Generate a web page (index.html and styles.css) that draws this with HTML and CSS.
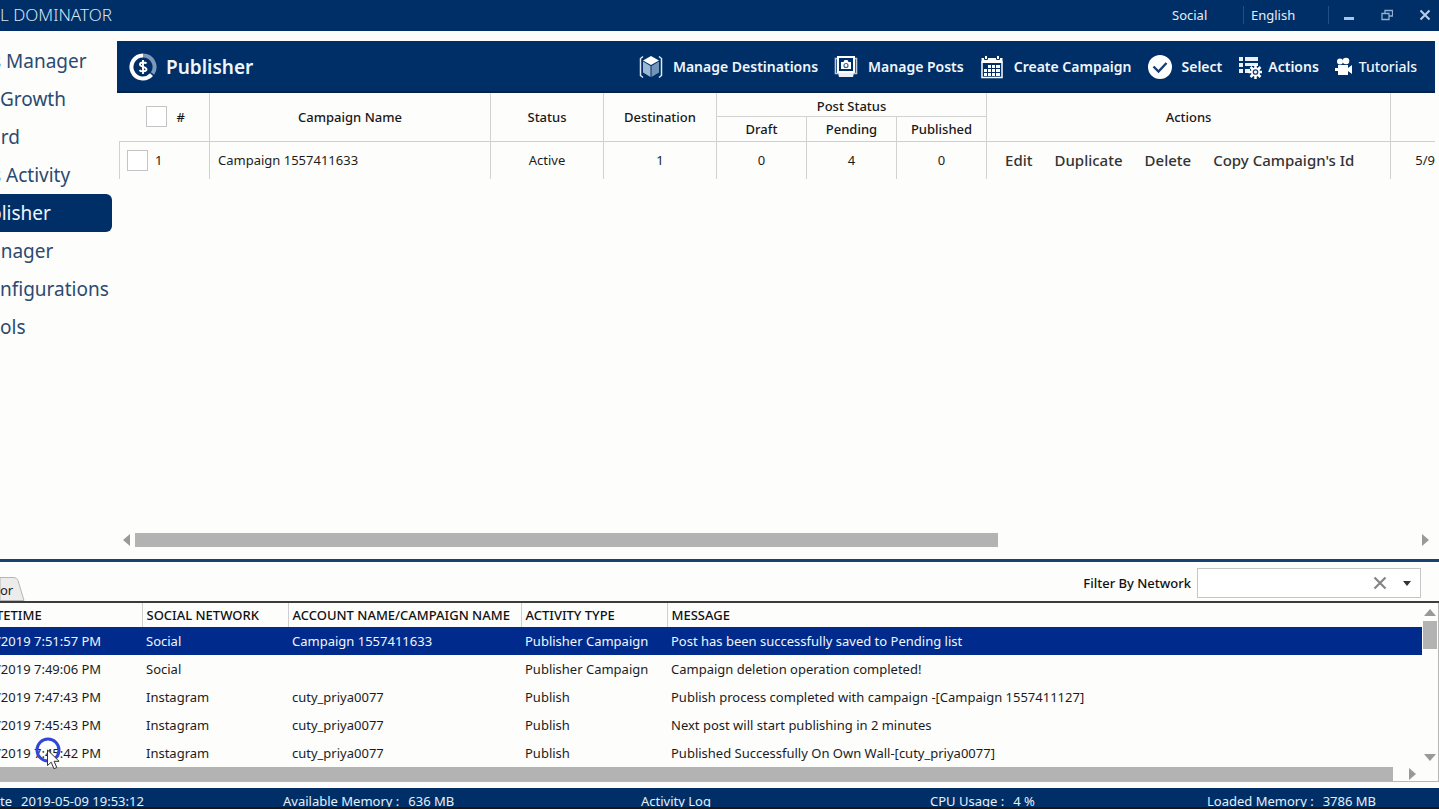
FILE: index.html
```html
<!DOCTYPE html>
<html lang="en">
<head>
<meta charset="utf-8">
<title>Social Dominator</title>
<link rel="stylesheet" href="styles.css">
</head>
<body>
<header class="titlebar">
  <span class="brand">L DOMINATOR</span>
  <button class="title-select network">Social</button>
  <button class="title-select language">English</button>
  <div class="window-buttons">
    <button aria-label="Minimize"><svg width="12" height="14" viewBox="0 0 12 14"><path d="M1 10.500h10" stroke="#a9c6e4" stroke-width="3"/></svg></button>
    <button aria-label="Restore"><svg width="12" height="14" viewBox="0 0 12 14" fill="none" stroke="#8fb0d2"><path d="M4 5V2.500h7.500v5.500H8M1 5.500h7v6H1z" stroke-width="1.300"/></svg></button>
    <button aria-label="Close"><svg width="12" height="14" viewBox="0 0 12 14"><path d="M1.500 2.500l9 9M10.500 2.500l-9 9" stroke="#b7d0e8" stroke-width="2"/></svg></button>
  </div>
</header>

<div class="workspace">
  <nav class="sidebar">
    <a href="#" class="nav-item cut">s Manager</a>
    <a href="#" class="nav-item">Growth</a>
    <a href="#" class="nav-item cut-wide">ard</a>
    <a href="#" class="nav-item cut">s Activity</a>
    <a href="#" class="nav-item active cut-wide">blisher</a>
    <a href="#" class="nav-item cut-wide">anager</a>
    <a href="#" class="nav-item">nfigurations</a>
    <a href="#" class="nav-item">ols</a>
  </nav>

  <main class="publisher">
    <div class="toolbar">
      <svg class="logo" width="28" height="28" viewBox="0 0 28 28" fill="none">
        <path d="M14 2.500a11.500 11.500 0 0 1 9.500 18" stroke="#7d98bb" stroke-width="4"/>
        <path d="M14 2.500a11.500 11.500 0 1 0 8.500 19.200" stroke="#fff" stroke-width="4"/>
        <path d="M17.500 10.500c-1-1.300-6.500-1.600-6.500 1 0 2.700 6.500 1.900 6.500 4.800 0 2.600-5.700 2.500-7 .8M14 7v14" stroke="#fff" stroke-width="1.900"/>
      </svg>
      <h1>Publisher</h1>
      <div class="tools">
        <button class="tool wide">
          <svg width="24" height="24" viewBox="0 0 24 24"><path d="M12 1l8 4.500-8 4.500-8-4.500z" fill="#fff"/><path d="M4 6.500l7.500 4.500v11L4 17.500z" fill="#9db8d2"/><path d="M20 6.500L12.500 11v11l7.500-4.500z" fill="#7294b8"/><path d="M4 1.500L1.500 3.500v17L4 22.500M20 1.500l2.500 2v17l-2.500 2" fill="none" stroke="#dbe8f3" stroke-width="1.500"/></svg>
          Manage Destinations</button>
        <button class="tool wide">
          <svg width="24" height="24" viewBox="0 0 24 24"><path d="M4 2h16v15H4z" fill="none" stroke="#fff" stroke-width="2"/><path d="M3 3.500H1.500v15H4M21 3.500h1.500v15H20" fill="none" stroke="#b8cce0" stroke-width="1.600"/><path d="M4 18h16l-1 4H5z" fill="#e8f1f8"/><path d="M7 7h2.500l1-2h3l1 2H17v7H7z" fill="#fff"/><circle cx="12" cy="10.500" r="2" fill="none" stroke="#3d6390" stroke-width="1.200"/></svg>
          Manage Posts</button>
        <button class="tool wide">
          <svg width="24" height="24" viewBox="0 0 24 24"><path d="M1.500 3h21v5h-21z" fill="#fff"/><path d="M2 7h20v15.500H2z" fill="none" stroke="#fff" stroke-width="1.500"/><path d="M4.500.5h3v4h-3zM16.500.5h3v4h-3z" fill="#fff" stroke="#002f67"/><path d="M8 10h3v3H8zM12 10h3v3h-3zM16 10h4v3h-4zM4 14h3v3H4zM8 14h3v3H8zM12 14h3v3h-3zM16 14h4v3h-4zM4 18h3v3H4zM8 18h3v3H8zM12 18h3v3h-3zM16 18h4v3h-4z" fill="#fff"/></svg>
          Create Campaign</button>
        <button class="tool wide">
          <svg width="24" height="24" viewBox="0 0 24 24"><circle cx="12" cy="12" r="12" fill="#fff"/><path d="M5.500 11.500l5 5L18.500 8" fill="none" stroke="#173e72" stroke-width="2.400"/></svg>
          Select</button>
        <button class="tool">
          <svg width="24" height="24" viewBox="0 0 24 24"><path d="M1 2h4v4H1zM7 2h13v4H7zM1 8h4v4H1zM7 8h13v3H7zM1 14h4v4H1zM7 14h5v4H7z" fill="#e8f1f8"/><path d="M17.500 10v14M10.500 17h14M12.500 12l10 10M22.500 12l-10 10" stroke="#fff" stroke-width="2.500"/><circle cx="17.500" cy="17" r="4.500" fill="#fff"/><circle cx="17.500" cy="17" r="2.200" fill="#fff" stroke="#173e72" stroke-width="1.300"/></svg>
          Actions</button>
        <button class="tool light">
          <svg width="18" height="20" viewBox="0 0 18 20" fill="#fff"><circle cx="5" cy="4.500" r="3"/><circle cx="11" cy="4" r="3.300"/><path d="M3 8h10v3l4-3v9l-4-3v4H3v-4H0v-3h3z"/></svg>
          Tutorials</button>
      </div>
    </div>

    <div class="grid-area">
      <table class="campaigns">
        <colgroup><col class="c-num"><col class="c-name"><col class="c-mid"><col class="c-mid"><col class="c-post"><col class="c-post"><col class="c-post"><col class="c-act"><col></colgroup>
        <thead>
          <tr class="group-row">
            <th rowspan="2" class="pick-all"><label><input type="checkbox"> #</label></th>
            <th rowspan="2">Campaign Name</th>
            <th rowspan="2">Status</th>
            <th rowspan="2">Destination</th>
            <th colspan="3" class="group">Post Status</th>
            <th rowspan="2">Actions</th>
            <th rowspan="2"></th>
          </tr>
          <tr class="sub-row"><th>Draft</th><th>Pending</th><th>Published</th></tr>
        </thead>
        <tbody>
          <tr>
            <td class="pick"><label><input type="checkbox"> 1</label></td>
            <td class="name">Campaign 1557411633</td>
            <td>Active</td><td>1</td><td>0</td><td>4</td><td>0</td>
            <td class="row-actions"><div><button>Edit</button><button>Duplicate</button><button>Delete</button><button>Copy Campaign's Id</button></div></td>
            <td class="date">5/9</td>
          </tr>
        </tbody>
      </table>
    </div>

    <div class="hscroll">
      <svg width="7" height="12" viewBox="0 0 7 12"><path d="M7 0v12L0 6z" fill="#999"/></svg>
      <div class="track"><div class="thumb"></div></div>
      <svg width="7" height="12" viewBox="0 0 7 12"><path d="M0 0v12l7-6z" fill="#999"/></svg>
    </div>
  </main>
</div>

<section class="log">
  <div class="log-head">
    <div class="tab">
      <svg width="26" height="24" viewBox="0 0 26 24"><path d="M0 .5h13c3 0 4 1 5 3l6 20H0z" fill="#ececec" stroke="#b5b5b5"/></svg>
      <span>or</span>
    </div>
    <label class="filter-label" for="network">Filter By Network</label>
    <div class="combo">
      <input id="network" type="text">
      <button aria-label="Clear"><svg width="14" height="14" viewBox="0 0 14 14"><path d="M1.500 1.500l11 11M12.500 1.500l-11 11" stroke="#858585" stroke-width="2.200"/></svg></button>
      <button aria-label="Open list"><svg width="8" height="5" viewBox="0 0 8 5"><path d="M0 0h8L4 5z" fill="#333"/></svg></button>
    </div>
  </div>
  <div class="log-body">
    <div class="log-main">
      <table class="events">
        <colgroup><col class="e-time"><col class="e-net"><col class="e-acc"><col class="e-type"><col></colgroup>
        <thead><tr><th>TETIME</th><th>SOCIAL NETWORK</th><th>ACCOUNT NAME/CAMPAIGN NAME</th><th>ACTIVITY TYPE</th><th>MESSAGE</th></tr></thead>
        <tbody>
          <tr class="selected"><td>/2019 7:51:57 PM</td><td>Social</td><td>Campaign 1557411633</td><td>Publisher Campaign</td><td>Post has been successfully saved to Pending list</td></tr>
          <tr><td>/2019 7:49:06 PM</td><td>Social</td><td></td><td>Publisher Campaign</td><td>Campaign deletion operation completed!</td></tr>
          <tr><td>/2019 7:47:43 PM</td><td>Instagram</td><td>cuty_priya0077</td><td>Publish</td><td>Publish process completed with campaign -[Campaign 1557411127]</td></tr>
          <tr><td>/2019 7:45:43 PM</td><td>Instagram</td><td>cuty_priya0077</td><td>Publish</td><td>Next post will start publishing in 2 minutes</td></tr>
          <tr><td>/2019 7:45:42 PM</td><td>Instagram</td><td>cuty_priya0077</td><td>Publish</td><td>Published Successfully On Own Wall-[cuty_priya0077]</td></tr>
        </tbody>
      </table>
    </div>
    <div class="vscroll">
      <svg width="12" height="7" viewBox="0 0 12 7"><path d="M0 7h12L6 0z" fill="#999"/></svg>
      <div class="thumb"></div>
      <svg width="12" height="7" viewBox="0 0 12 7"><path d="M0 0h12L6 7z" fill="#999"/></svg>
    </div>
  </div>
  <div class="log-hscroll">
    <div class="thumb"></div>
    <svg width="7" height="12" viewBox="0 0 7 12"><path d="M0 0v12l7-6z" fill="#999"/></svg>
  </div>
</section>

<footer class="status">
  <div class="stat s-date"><span>te</span><span>2019-05-09 19:53:12</span></div>
  <div class="stat s-mem"><span>Available Memory :</span><span>636 MB</span></div>
  <div class="stat s-log"><span>Activity Log</span></div>
  <div class="stat s-cpu"><span>CPU Usage :</span><span>4 %</span></div>
  <div class="stat s-load"><span>Loaded Memory :</span><span>3786 MB</span></div>
</footer>

<svg class="pointer" width="28" height="36" viewBox="0 0 28 36">
  <circle cx="13" cy="13" r="11" fill="none" stroke="#3145d8" stroke-width="3"/>
  <path d="M12.500 13v15.500l3.700-3.300 2.700 6.500 2.900-1.200-2.700-6.200h5z" fill="#fff" stroke="#333"/>
</svg>
</body>
</html>
```
FILE: styles.css
```css
* { box-sizing: border-box; }

body {
  margin: 0;
  height: 100vh;
  display: flex;
  flex-direction: column;
  overflow: hidden;
  position: relative;
  background: #fdfdfc;
  color: #1c1c1c;
  font: 13px/18px "Noto Sans", "Open Sans", sans-serif;
}

button {
  padding: 0;
  border: 0;
  background: none;
  color: inherit;
  font: inherit;
  white-space: nowrap;
}

svg { display: block; flex: none; }

/* Title bar */
.titlebar {
  flex: none;
  display: flex;
  align-items: center;
  height: 31px;
  padding: 0 8px 2px 0;
  background: #002f67;
  color: #e4eef7;
}
.brand { flex: 1; font-size: 17px; font-weight: 300; color: #d4e4f2; }
.title-select { text-align: left; }
.network { width: 71px; }
.language { width: 86px; height: 18px; padding-left: 7px; border-left: 1px solid #234f82; border-right: 1px solid #234f82; }
.window-buttons { display: flex; gap: 26px; padding-left: 14px; }

/* Upper workspace */
.workspace { flex: 1; min-height: 0; display: flex; border-bottom: 3px solid #1a4270; }
.sidebar { flex: none; width: 117px; padding: 11px 5px 0 0; overflow: hidden; }
.nav-item {
  display: block;
  height: 38px;
  color: #2b4a70;
  font-size: 19px;
  line-height: 39px;
  text-decoration: none;
  white-space: nowrap;
}
.cut { text-indent: -8px; }
.cut-wide { text-indent: -10px; }
.active { background: #002f67; color: #f0f5fa; border-radius: 0 6px 6px 0; }

.publisher { flex: 1; min-width: 0; display: flex; flex-direction: column; padding-top: 10px; }
.toolbar {
  flex: none;
  display: flex;
  align-items: center;
  height: 52px;
  margin-right: 4px;
  padding: 2px 18px 0 12px;
  background: #002f67;
  border-bottom: 2px solid #052143;
  color: #f0f6fb;
}
h1 { margin: 0 auto 0 9px; font-size: 19px; line-height: 26px; font-weight: 600; }
.tools { display: flex; gap: 16px; }
.tool { display: flex; align-items: center; gap: 6px; font-size: 14px; font-weight: 600; }
.wide { gap: 10px; }
.light { font-weight: 500; }

/* Campaign grid */
.grid-area { flex: 1; min-height: 0; margin-right: 4px; padding-left: 2px; overflow: hidden; }
.campaigns { width: 100%; table-layout: fixed; border-collapse: collapse; }
.c-num { width: 90px; }
.c-name { width: 281px; }
.c-mid { width: 113px; }
.c-post { width: 90px; }
.c-act { width: 404px; }
.campaigns th, .campaigns td { padding: 0; text-align: center; border-left: 1px solid #d2d2d2; }
.campaigns th { font-weight: 500; color: #181818; }
.campaigns th:first-child { border-left: 0; }
.campaigns .sub-row th:first-child { border-left: 1px solid #d2d2d2; }
.campaigns .group { padding-top: 4px; }
.group-row { height: 23px; }
.sub-row { height: 25px; }
.sub-row th { border-top: 1px solid #d2d2d2; }
.campaigns tbody tr { height: 38px; border-top: 1px solid #cfcfcf; }
.campaigns label { display: flex; align-items: center; gap: 7px; padding-left: 7px; }
.campaigns .pick-all label { gap: 10px; padding-left: 26px; }
input[type="checkbox"] { appearance: none; width: 21px; height: 21px; margin: 0; border: 1px solid #c4c4c4; background: #fff; }
.campaigns .name { padding-left: 8px; text-align: left; }
.row-actions div { display: flex; gap: 22px; padding-left: 18px; font-size: 15px; font-weight: 500; color: #333; }
.campaigns .date { text-align: right; }

.hscroll { flex: none; display: flex; align-items: center; gap: 5px; height: 38px; padding: 0 10px 0 6px; }
.track { flex: 1; }
.thumb { background: #b3b3b3; }
.hscroll .thumb { width: 67.300%; height: 14px; }

/* Activity log */
.log { flex: none; display: flex; flex-direction: column; margin-bottom: 6px; }
.log-head { display: flex; align-items: center; height: 41px; padding: 3px 18px 0 0; border-bottom: 2px solid #3c3c3c; }
.tab { position: relative; align-self: flex-end; margin-right: auto; }
.tab span { position: absolute; left: 0; top: 4px; }
.filter-label { margin-right: 6px; font-weight: 500; color: #111; }
.combo { display: flex; align-items: center; gap: 16px; width: 224px; height: 30px; padding-right: 9px; border: 1px solid #c6c6c6; background: #fff; }
.combo input { flex: 1; min-width: 0; height: 100%; border: 0; background: none; font: inherit; outline: 0; }

.log-body { display: flex; border-right: 1px solid #b8b8b8; }
.log-main { flex: 1; min-width: 0; }
.events { width: 100%; table-layout: fixed; border-collapse: collapse; white-space: nowrap; }
.e-time { width: 142px; }
.e-net { width: 146px; }
.e-acc { width: 233px; }
.e-type { width: 146px; }
.events th, .events td { padding: 0 0 0 4px; text-align: left; font-weight: 400; }
.events th:first-child, .events td:first-child { padding-left: 0; text-indent: -4px; }
.events th { height: 24px; border-right: 1px solid #d0d0d0; color: #111; font-weight: 500; }
.events th:last-child { border-right: 0; }
.events td { height: 28px; }
.selected { background: #002b8c; color: #f2f6fc; }
.vscroll { display: flex; flex-direction: column; align-items: center; gap: 5px; width: 16px; padding: 6px 0; }
.vscroll .thumb { width: 14px; height: 28px; margin-bottom: auto; }
.log-hscroll { display: flex; align-items: center; gap: 16px; height: 15px; padding-right: 22px; border-right: 1px solid #b8b8b8; border-bottom: 1px solid #b8b8b8; }
.log-hscroll .thumb { flex: 1; height: 14px; }

/* Status bar */
.status {
  flex: none;
  display: flex;
  height: 21px;
  padding-top: 4px;
  overflow: hidden;
  background: #002f67;
  border-bottom: 2px solid #161616;
  color: #e6eff8;
  white-space: nowrap;
}
.stat { display: flex; gap: 9px; }
.s-date { width: 283px; }
.s-mem { width: 358px; }
.s-log { width: 289px; }
.s-cpu { width: 277px; }

/* Mouse pointer with click ring */
.pointer { position: absolute; left: 35px; top: 737px; pointer-events: none; }
```
